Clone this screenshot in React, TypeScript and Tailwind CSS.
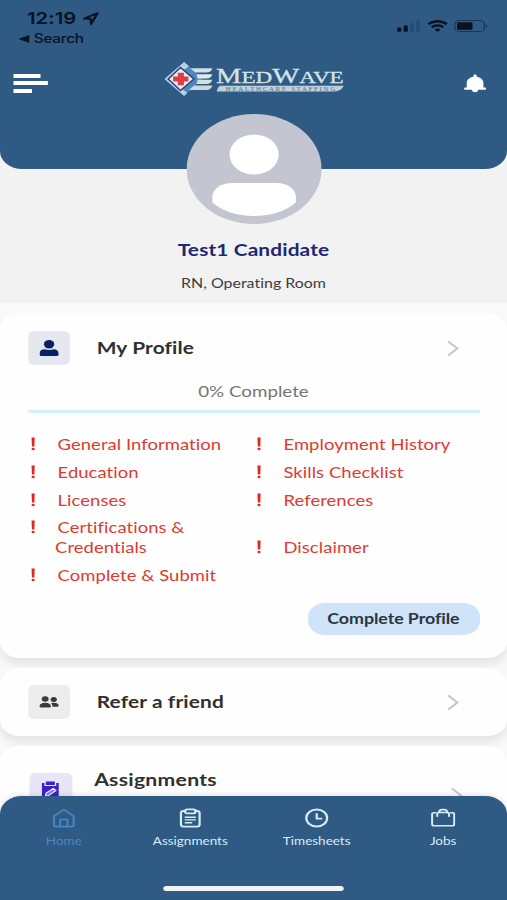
import { ReactNode } from "react";
import { clsx } from "clsx";

const leftItems = [
  ["General Information"],
  ["Education"],
  ["Licenses"],
  ["Certifications &", "Credentials"],
  ["Complete & Submit"],
];

function StatusBar() {
  return (
    <div className="h-[50px] pt-[9px] flex justify-between text-[#07131f] font-['Inter',sans-serif]">
      <div>
        <div className="flex items-center pl-[22px] h-[19px]">
          <span className="text-[16.5px] font-semibold leading-[19px]">12:19</span>
          <svg className="ml-[5px] w-[14px] h-[13px]" viewBox="0 0 13 13" fill="none">
            <path
              d="M1 6.6L12 1L6.7 12L6.3 6.8Z"
              stroke="currentColor"
              strokeWidth="1.9"
              strokeLinejoin="round"
            />
          </svg>
        </div>
        <div className="flex items-center pl-[14.5px] mt-[3px] h-[16px]">
          <svg className="w-[9px] h-[8px]" viewBox="0 0 9 8">
            <path d="M0 4L9 0V8Z" fill="currentColor" />
          </svg>
          <span className="ml-[4px] text-[12.5px] tracking-[-0.2px] font-medium leading-4">Search</span>
        </div>
      </div>
      <div className="flex items-start pt-[11px] pr-[15.5px]">
        <svg className="w-[20px] h-[12px]" viewBox="0 0 20 12" fill="currentColor">
          <rect x="0.5" y="7.5" width="3.4" height="4.2" rx="1" />
          <rect x="5.8" y="5.5" width="3.4" height="6.2" rx="1" />
          <rect x="11" y="3" width="3.2" height="8.7" rx="1" opacity="0.18" />
          <rect x="16" y="0.5" width="3.2" height="11.2" rx="1" opacity="0.18" />
        </svg>
        <svg className="ml-[5px] w-[17px] h-[12px]" viewBox="0 0 17 12" fill="none" stroke="currentColor">
          <path d="M1 4.1C5.2 0.2 11.8 0.2 16 4.1" strokeWidth="2.4" />
          <path d="M3.8 7.3C6.5 4.8 10.5 4.8 13.2 7.3" strokeWidth="2.2" />
          <path d="M8.5 11.9L6 9.5C7.4 8.3 9.6 8.3 11 9.5Z" fill="currentColor" stroke="none" />
        </svg>
        <svg className="ml-[5px] w-[28px] h-[12px]" viewBox="0 0 28 12">
          <rect x="0.6" y="0.6" width="24" height="10.8" rx="3.4" fill="none" stroke="currentColor" opacity="0.5" />
          <rect x="2.3" y="2.2" width="12.6" height="7.6" rx="1.4" fill="currentColor" />
          <path d="M25.8 4V8C27.3 7.4 27.3 4.6 25.8 4Z" fill="currentColor" opacity="0.5" />
        </svg>
      </div>
    </div>
  );
}

function Logo() {
  return (
    <svg className="w-[147px] h-[36px]" viewBox="0 0 147 36">
      <path d="M16 1L31 18L16 35L0 18Z" fill="#4f86bd" />
      <path d="M16 1L0 18L16 35L18.5 32L5 18L20 5.3Z" fill="#b9cfe2" />
      <path d="M13 6.5L24 18L13 29.5L3 18Z" fill="#e9eef4" stroke="#24497d" strokeWidth="1.3" />
      <path d="M21 7.2H39Q38 11.6 34 11.6H25Z" fill="#d3e1e6" />
      <path d="M26 13.2H39Q38 17.4 34 17.4H27Z" fill="#e1eaed" />
      <path d="M27 18.8H39Q38 23 34 23H26Z" fill="#d3e1e6" />
      <path d="M24 24.6H39Q38 29 34 29H20Z" fill="#c8d9e0" />
      <path d="M10.8 11.7H15.8V15.5H19.5V20.5H15.8V24.3H10.8V20.5H7V15.5H10.8Z" fill="#e03c45" />
      <text
        x="42"
        y="22"
        fontSize="21"
        fontFamily="Liberation Serif, serif"
        fill="#d5e2e6"
        stroke="#d5e2e6"
        strokeWidth="0.3"
        textLength="104"
        lengthAdjust="spacingAndGlyphs"
      >
        M<tspan fontSize="17">ED</tspan>W<tspan fontSize="17">AVE</tspan>
      </text>
      <path d="M45 24.8H146Q144 30.5 138 30.5H42.5Q43 26.5 45 24.8Z" fill="#bfd0da" />
      <text
        x="50"
        y="29.8"
        fontSize="5.6"
        fontFamily="Liberation Serif, serif"
        fill="#4d7195"
        textLength="89"
      >
        HEALTHCARE STAFFING
      </text>
    </svg>
  );
}

function Header() {
  return (
    <header className="h-[169px] bg-[#2f5a83] rounded-b-[18px]">
      <StatusBar />
      <div className="flex items-center h-[66px] pl-[10.6px] pr-[17px]">
        <div className="flex flex-col gap-[3.5px]">
          <div className="h-[4px] w-[22px] bg-white" />
          <div className="h-[4px] w-[28px] bg-white" />
          <div className="h-[4px] w-[15.5px] bg-white" />
        </div>
        <div className="ml-[95.6px] mb-[8px]">
          <Logo />
        </div>
        <svg className="ml-auto w-[18px] h-[19px]" viewBox="0 0 18 19" fill="white">
          <path d="M9 0.5C9.8 0.5 10.3 1 10.3 1.9V2.7C13.6 3.3 15.8 5.8 15.8 9V13.4H17Q18 13.5 18 14.6Q18 15.8 17 15.8H11.6C11.2 17.6 10.3 18.3 9 18.3C7.7 18.3 6.8 17.6 6.4 15.8H1Q0 15.8 0 14.6Q0 13.5 1 13.4H2.2V9C2.2 5.8 4.4 3.3 7.7 2.7V1.9C7.7 1 8.2 0.5 9 0.5Z" />
        </svg>
      </div>
    </header>
  );
}

function Chevron() {
  return (
    <svg className="w-[10px] h-[17px]" viewBox="0 0 10 17" fill="none">
      <path d="M1 1.3L8.6 8.5L1 15.7" stroke="#c6c6c6" strokeWidth="1.8" />
    </svg>
  );
}

interface CardRowProps {
  title: string;
  tile: string;
  icon: ReactNode;
}

function CardRow({ title, tile, icon }: CardRowProps) {
  return (
    <div className="flex items-center h-[34px]">
      <div className={clsx("w-[34px] h-[34px] rounded-[5px] flex items-center justify-center", tile)}>
        {icon}
      </div>
      <h2 className="ml-[22.3px] text-[17px] font-bold tracking-[0.1px] text-[#303030]">{title}</h2>
      <div className="ml-auto mr-[17px]">
        <Chevron />
      </div>
    </div>
  );
}

function ListItem({ lines }: { lines: string[] }) {
  return (
    <li className="flex mb-[7.8px]">
      <svg className="w-[4px] h-[14px] mt-[3px] ml-[2.8px] mr-[17.6px]" viewBox="0 0 4 14" fill="#e0281f">
        <path d="M0.7 0.5H3.3L3 9.4H1Z" />
        <circle cx="2" cy="12" r="1.3" />
      </svg>
      <div>
        {lines.map((line, i) => (
          <p key={line} className={clsx("leading-5", i > 0 && "-ml-[2px]")}>
            {line}
          </p>
        ))}
      </div>
    </li>
  );
}

function ProfileCard() {
  return (
    <section className="h-[345px] bg-[#fefefe] rounded-2xl px-[22.5px] pt-[18px] shadow-[0_7px_8px_rgba(0,0,0,0.08)]">
      <CardRow
        title="My Profile"
        tile="bg-[#e6e8f0]"
        icon={
          <svg className="w-[16px] h-[16px]" viewBox="0 0 16 16" fill="#0b1f63">
            <circle cx="8" cy="4.3" r="4.2" />
            <path d="M0.3 13.2C0.3 10.8 2 9.3 4.4 9.3C6.5 10.2 9.5 10.2 11.6 9.3C14 9.3 15.7 10.8 15.7 13.2V14.7Q15.7 16 14.4 16H1.6Q0.3 16 0.3 14.7Z" />
          </svg>
        }
      />
      <p className="mt-[16px] text-center text-[15.3px] leading-5 text-[#757575]">0% Complete</p>
      <div className="mt-[9px] h-[3px] bg-[#d3f1f6]" />
      <div className="mt-[21px] flex text-[15px] tracking-[0.06px] text-[#df3a30]">
        <ul className="w-[184px]">
          {leftItems.map(lines => (
            <ListItem key={lines[0]} lines={lines} />
          ))}
        </ul>
        <ul>
          <ListItem lines={["Employment History"]} />
          <ListItem lines={["Skills Checklist"]} />
          <ListItem lines={["References"]} />
          <li className="h-5" />
          <ListItem lines={["Disclaimer"]} />
        </ul>
      </div>
      <div className="mt-[10px] flex justify-end">
        <button className="w-[140px] h-8 pb-px rounded-[14px] bg-[#cfe3f9] text-[14.5px] font-bold tracking-[-0.05px] text-[#2c363f]">
          Complete Profile
        </button>
      </div>
    </section>
  );
}

interface TabProps {
  label: string;
  active?: boolean;
  children: ReactNode;
}

function Tab({ label, active, children }: TabProps) {
  return (
    <div
      className={clsx(
        "w-[103px] flex flex-col items-center",
        active ? "text-[#4687c4]" : "text-[#d5edf8]"
      )}>
      <svg
        className="w-[20px] h-[20px]"
        viewBox="0 0 20 20"
        fill="none"
        stroke="currentColor"
        strokeWidth="1.8"
        strokeLinejoin="round"
        strokeLinecap="round">
        {children}
      </svg>
      <span className="mt-[5px] text-[11px] leading-4">{label}</span>
    </div>
  );
}

function TabBar() {
  return (
    <nav className="absolute inset-x-0 bottom-0 h-[104px] bg-[#2f5a83] rounded-t-[18px] shadow-[0_-1px_5px_rgba(0,0,0,0.12)] flex flex-col items-center">
      <div className="flex pt-[12px]">
        <Tab label="Home" active>
          <path d="M2 8.2L10 1.5L18 8.2V17Q18 18.6 16.4 18.6H3.6Q2 18.6 2 17Z" strokeWidth="1.6" />
          <path d="M7 18.3V11.5H13V18.3" strokeWidth="1.6" />
        </Tab>
        <Tab label="Assignments">
          <path d="M5.8 3H4.4Q2.4 3 2.4 5V16.6Q2.4 18.6 4.4 18.6H15.6Q17.6 18.6 17.6 16.6V5Q17.6 3 15.6 3H14.2" />
          <rect x="5.8" y="1.4" width="8.4" height="4" rx="1.5" />
          <path d="M6 9.2H14M6 11.9H14M6 14.7H11" strokeWidth="1.4" />
        </Tab>
        <Tab label="Timesheets">
          <circle cx="10" cy="10" r="8.5" />
          <path d="M10 5.8V10.7H13.8" />
        </Tab>
        <Tab label="Jobs">
          <path d="M4 4.8H2.5Q1 4.8 1 6.3V16.2Q1 17.7 2.5 17.7H17.5Q19 17.7 19 16.2V6.3Q19 4.8 17.5 4.8H16" strokeWidth="1.6" />
          <path d="M5.2 8.2V5.8Q5.4 4.6 6.6 4.5M13.4 4.5Q14.6 4.6 14.8 5.8V8.2" strokeWidth="1.6" />
          <path d="M6.6 4.5Q6.8 1.6 9 1.6H11Q13.2 1.6 13.4 4.5Z" strokeWidth="1.6" />
        </Tab>
      </div>
      <div className="mt-auto mb-[9px] w-[147px] h-[5.5px] rounded-full bg-[#f2f3f5]" />
    </nav>
  );
}

export default function App() {
  return (
    <div className="w-[507px] h-[900px] overflow-hidden">
      <div className="relative w-[413px] h-[900px] overflow-hidden origin-left scale-x-[1.2276] bg-[#f9f9f9] font-['Lato',sans-serif] [font-variant-ligatures:none]">
        <div className="h-[303px] bg-[#f2f2f2]">
          <Header />
          <div className="-mt-[55px] flex flex-col items-center">
            <svg className="w-[110px] h-[110px]" viewBox="0 0 110 110">
              <circle cx="55" cy="55" r="55" fill="#c3c6d1" />
              <circle cx="55" cy="40.5" r="20" fill="white" />
              <path
                d="M37 69H73C82 69 89 75 89 83V88.5C81 97 69 102 55 102C41 102 29 97 21 88.5V83C21 75 28 69 37 69Z"
                fill="white"
              />
            </svg>
            <h1 className="mt-[14px] text-[17px] font-bold tracking-[0.1px] leading-6 text-[#1d2872]">
              Test1 Candidate
            </h1>
            <p className="mt-[11px] text-[13px] leading-5 text-[#3c3c3c]">RN, Operating Room</p>
          </div>
        </div>

        <div className="pt-[10px] flex flex-col gap-[10px]">
          <ProfileCard />
          <section className="h-[68px] bg-[#fefefe] rounded-2xl px-[22.5px] pt-[17px] shadow-[0_7px_8px_rgba(0,0,0,0.08)]">
            <CardRow
              title="Refer a friend"
              tile="bg-[#ececec]"
              icon={
                <svg className="w-[16px] h-[12px]" viewBox="0 0 16 12" fill="#3a3a3a">
                  <circle cx="4.8" cy="3" r="2.8" />
                  <circle cx="11.8" cy="3.6" r="2.5" />
                  <path d="M0.2 10.2C0.2 8 2 6.8 4.8 6.8C7.6 6.8 9.4 8 9.4 10.2Q9.4 11.6 8.4 11.6H1.2Q0.2 11.6 0.2 10.2Z" />
                  <path d="M9.6 7.2C10.3 6.9 11 6.8 11.8 6.8C14.2 6.8 15.8 7.8 15.8 9.5Q15.8 10.8 14.8 10.8H10.7C10.8 9.4 10.5 8.2 9.6 7.2Z" />
                </svg>
              }
            />
          </section>
          <section className="h-[160px] bg-[#fefefe] rounded-2xl pl-[23.5px] pr-[20px] pt-[22px] flex">
            <div className="mt-[5px] w-[35px] h-[35px] rounded-[5px] bg-[#e7e5f7] flex justify-center pt-[8px]">
              <svg className="w-[16px] h-[20px]" viewBox="0 0 14 19">
                <path d="M0.5 2H3.5V0.5H10.5V2H13.5V19H0.5Z" fill="#3d20c9" />
                <path d="M3 1.8V4.3H11V1.8" fill="none" stroke="#e7e5f7" strokeWidth="1.1" />
                <path d="M3 14.5L3.8 11.5L9.3 7L11.3 9L5.8 13.8Z" fill="#8c7be4" stroke="#f3f1ff" />
              </svg>
            </div>
            <h2 className="ml-[18.2px] text-[17.3px] font-bold tracking-[0.2px] leading-6 text-[#303030]">
              Assignments
            </h2>
            <div className="ml-auto mr-[16.5px] mt-[19px]">
              <Chevron />
            </div>
          </section>
        </div>

        <TabBar />
      </div>
    </div>
  );
}
